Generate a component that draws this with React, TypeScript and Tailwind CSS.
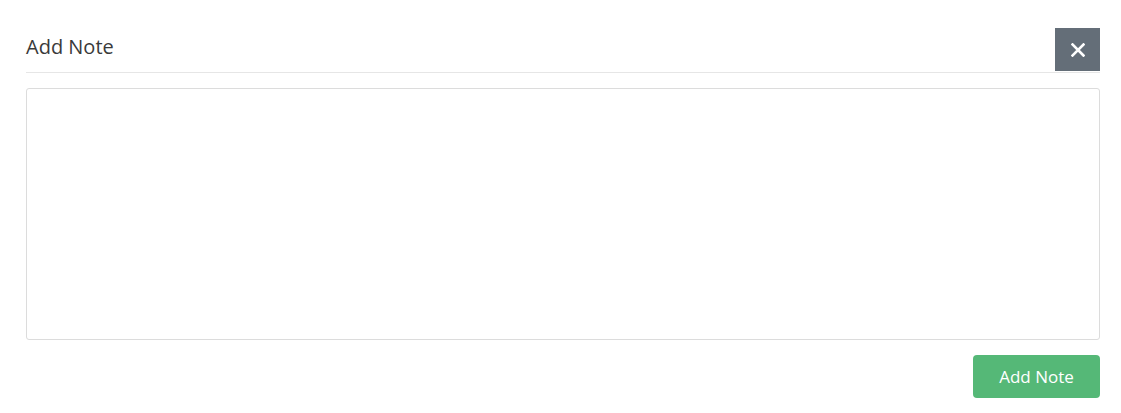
export default function App() {
  return (
    <div className="min-h-[413px] bg-white pl-[26px] pr-[21px] pt-[28px] font-['Open_Sans',sans-serif]">
      <div className="flex items-start justify-between border-b border-[#e6e6e6] pb-[1px]">
        <h2 className="pt-[9px] text-[20px] font-normal leading-[20px] text-[#3a3a3a]">Add Note</h2>
        <button
          type="button"
          aria-label="Close"
          className="flex h-[43px] w-[45px] items-center justify-center bg-[#646e78]"
        >
          <svg width="14" height="14" viewBox="0 0 14 14" fill="none">
            <path d="M1.5 1.5L12.5 12.5M12.5 1.5L1.5 12.5" stroke="white" strokeWidth="2.6" strokeLinecap="square" />
          </svg>
        </button>
      </div>

      <textarea className="mt-[15px] block h-[252px] w-full resize-none rounded-[3px] border border-[#dcdcdc] outline-none" />

      <div className="mt-[15px] flex justify-end">
        <button
          type="button"
          className="h-[43px] w-[127px] rounded-[4px] bg-[#55b877] text-[17px] leading-none text-white"
        >
          Add Note
        </button>
      </div>
    </div>
  );
}
